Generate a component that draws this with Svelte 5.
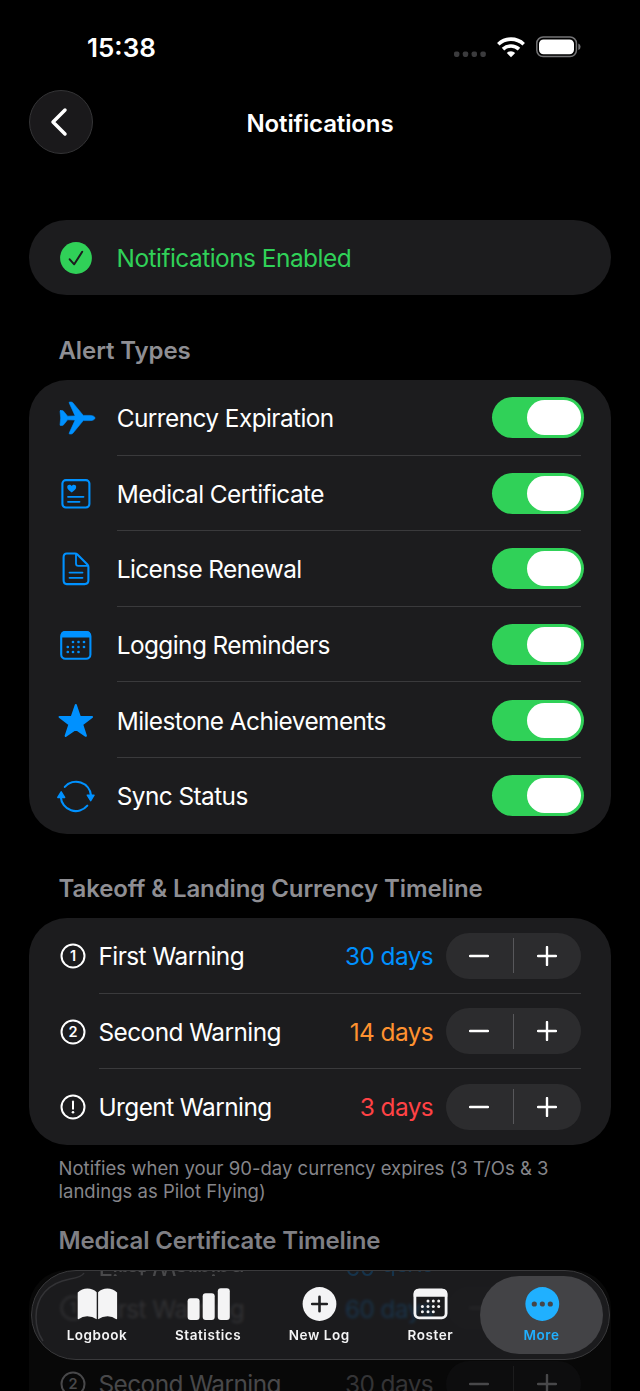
<script lang="ts">
  const alerts = $state([
    { icon: 'plane', label: 'Currency Expiration', on: true },
    { icon: 'medical', label: 'Medical Certificate', on: true },
    { icon: 'doc', label: 'License Renewal', on: true },
    { icon: 'calendar', label: 'Logging Reminders', on: true },
    { icon: 'star', label: 'Milestone Achievements', on: true },
    { icon: 'sync', label: 'Sync Status', on: true }
  ]);

  const landing = $state([
    { mark: '1', label: 'First Warning', days: 30, tone: 'blue' },
    { mark: '2', label: 'Second Warning', days: 14, tone: 'orange' },
    { mark: '!', label: 'Urgent Warning', days: 3, tone: 'red' }
  ]);

  const medical = $state([
    { mark: '1', label: 'First Warning', days: 60, tone: 'blue' },
    { mark: '2', label: 'Second Warning', days: 30, tone: 'plain' }
  ]);

  const tabs = [
    { icon: 'book', label: 'Logbook' },
    { icon: 'bars', label: 'Statistics' },
    { icon: 'add', label: 'New Log' },
    { icon: 'roster', label: 'Roster' },
    { icon: 'more', label: 'More' }
  ];
  let active = $state('More');
</script>

{#snippet calendarDots()}
  <g fill="currentColor" stroke="none">
    {#each [[17, 17], [22.5, 17], [28, 17], [11.8, 22], [17, 22], [22.5, 22], [28, 22], [11.8, 27], [17, 27], [22.5, 27]] as [x, y]}
      <circle cx={x} cy={y} r="1.35" />
    {/each}
  </g>
{/snippet}

{#snippet icon(name: string)}
  <svg class="icon" viewBox="0 0 40 40" fill="none" stroke="currentColor" stroke-width="2.1" stroke-linecap="round" stroke-linejoin="round">
    {#if name === 'plane'}
      <path d="M4.5 12.5h1.7q.9 0 1.4.7l4 5 7.5-.3-5.9-13q-.4-.9.6-.9h1.5q.9 0 1.5.7l10.5 12.7h6.7c2.8 0 5 1.1 5 2.6s-2.2 2.6-5 2.6h-6.7L16.8 35.3q-.6.7-1.5.7h-1.5q-1 0-.6-.9l5.9-13-7.5-.3-4 5q-.5.7-1.4.7H4.5q-.5 0-.5-.5l.7-7-.7-7q0-.5.5-.5z" fill="currentColor" stroke="currentColor" stroke-width=".6" />
    {:else if name === 'medical'}
      <rect x="6.4" y="6.100" width="27" height="27.400" rx="3.500" />
      <path d="M12 22.800h15.500M12 27.800h11.500" stroke-width="1.800" />
      <path d="M15.700 18.500c-2.800-1.700-4.500-3.400-4.500-5.400 0-2.600 3.200-3.200 4.500-1 1.300-2.200 4.500-1.600 4.500 1 0 2-1.700 3.700-4.500 5.400z" fill="currentColor" stroke="none" />
    {:else if name === 'doc'}
      <path d="M10.800 4.500h8.200q1.400 0 2.400 1l10 10q1 1 1 2.400v13.400q0 3.800-3.800 3.800H10.800Q7.600 35.100 7.600 31.300V8.300Q7.600 4.500 10.800 4.500z" />
      <path d="M20 5.500v9q0 2.400 2.400 2.400h9M13.500 23.600h13M13.500 28.800h13" stroke-width="1.800" />
    {:else if name === 'calendar'}
      <rect x="5.200" y="7" width="29.200" height="26.700" rx="4.200" />
      <path d="M5 12.500V10q0-4 4-4h21.600q4 0 4 4v2.500z" fill="currentColor" stroke="none" />
      {@render calendarDots()}
    {:else if name === 'star'}
      <path d="M19.800 5l4.100 12H36l-9.800 7.500 3.700 11.300-10.100-7-10.100 7 3.700-11.300L3.600 17h12.100z" fill="currentColor" />
    {:else if name === 'sync'}
      <path d="M8.800 10.900A15 15 0 0 1 35 19.400M31.300 29.700A15 15 0 0 1 4.800 20.900" />
      <path d="M31.300 19.200h6.700L34.700 24.700zM1.800 21.400h6.800L5.200 15.900z" fill="currentColor" stroke-width="1.500" />
    {/if}
  </svg>
{/snippet}

{#snippet tabIcon(name: string)}
  <svg class="tab-icon" viewBox="0 0 44 36" fill="currentColor">
    {#if name === 'book'}
      <path d="M2.700 6.500Q6.900 2.600 12.400 2.600q5.500 0 9.300 3.700v27Q17.400 30.300 12.200 30.300q-5 0-8.300 2.800-1.200.5-1.200-.6z" />
      <path d="M42.100 6.500Q37.900 2.600 32.400 2.600q-5.500 0-9.300 3.700v27q4.300-3 9.500-3 5 0 8.300 2.800 1.200.5 1.200-.6z" />
    {:else if name === 'bars'}
      <rect x="1.600" y="12.300" width="12" height="21.600" rx="3" />
      <rect x="16.700" y="7.300" width="12" height="26.600" rx="3" />
      <rect x="31.800" y="2.300" width="12" height="31.600" rx="3" />
    {:else if name === 'add'}
      <circle cx="22.500" cy="18" r="16.900" />
      <path d="M22.500 10.700v14.600M15.200 18h14.600" stroke="#202022" stroke-width="2.600" stroke-linecap="round" />
    {:else if name === 'roster'}
      <rect x="6.900" y="3.800" width="31.200" height="28" rx="4.300" fill="none" stroke="currentColor" stroke-width="2.800" />
      <path d="M5.700 10.800V8q0-5 5-5h23.600q5 0 5 5v2.800z" />
      {#each [[20, 15], [25.3, 15], [30.7, 15], [14.4, 20.4], [20, 20.4], [25.3, 20.4], [30.7, 20.4], [14.4, 25.8], [20, 25.8], [25.3, 25.8]] as [x, y]}
        <circle cx={x} cy={y} r="1.500" />
      {/each}
    {:else}
      <circle cx="22.300" cy="18" r="16.900" />
      <g fill="#454548">
        <circle cx="14.300" cy="18" r="2.600" />
        <circle cx="22.300" cy="18" r="2.600" />
        <circle cx="30.300" cy="18" r="2.600" />
      </g>
    {/if}
  </svg>
{/snippet}

{#snippet warningRow(row: any)}
  <div class="row warning">
    <svg class="mark" viewBox="0 0 26 26" fill="none" stroke="currentColor" stroke-width="2">
      <circle cx="13" cy="13" r="11.500" />
      {#if row.mark === '!'}
        <path d="M13 7.500v7.200" stroke-linecap="round" />
        <circle cx="13" cy="18.300" r="1.300" fill="currentColor" stroke="none" />
      {:else}
        <text x="13" y="18.300" text-anchor="middle" stroke="none" fill="currentColor">{row.mark}</text>
      {/if}
    </svg>
    <div class="row-main">
      <span class="label">{row.label}</span>
      <span class="days {row.tone}">{row.days} days</span>
      <div class="stepper">
        <button aria-label="Decrease" onclick={() => row.days--}>
          <svg viewBox="0 0 20 20"><path d="M1 10h18" /></svg>
        </button>
        <i></i>
        <button aria-label="Increase" onclick={() => row.days++}>
          <svg viewBox="0 0 20 20"><path d="M1 10h18M10 1v18" /></svg>
        </button>
      </div>
    </div>
  </div>
{/snippet}

<div class="screen">
  <div class="status">
    <span class="time">15:38</span>
    <div class="signals">
      <svg width="33" height="22" viewBox="0 0 33 22" fill="#3b3b3d">
        <rect x="1" y="15.500" width="5.400" height="5.400" rx="1.800" />
        <rect x="9.800" y="15.500" width="5.400" height="5.400" rx="1.800" />
        <rect x="18.600" y="15.500" width="5.400" height="5.400" rx="1.800" />
        <rect x="27.400" y="15.500" width="5.400" height="5.400" rx="1.800" />
      </svg>
      <svg width="28" height="22" viewBox="0 0 28 22" fill="none" stroke="#fff" stroke-width="3.600">
        <path d="M1.300 8.200a18.500 18.500 0 0 1 25.400 0M6 13.100a11.800 11.800 0 0 1 16 0" />
        <path d="M14 21.200l-4.200-4.300a6.200 6.200 0 0 1 8.400 0z" fill="#fff" stroke="none" />
      </svg>
      <svg width="45" height="22" viewBox="0 0 45 22">
        <rect x=".8" y="1" width="39.600" height="19.600" rx="6.300" fill="none" stroke="#747476" stroke-width="1.500" />
        <rect x="3" y="3.400" width="35" height="14.800" rx="4.500" fill="#fff" />
        <path d="M42.300 7.500q2.300.8 2.300 3.300t-2.300 3.300z" fill="#747476" />
      </svg>
    </div>
  </div>

  <header>
    <button class="back" aria-label="Back">
      <svg width="18" height="30" viewBox="0 0 18 30"><path d="M15 3L3 15l12 12" /></svg>
    </button>
    <h1>Notifications</h1>
  </header>

  <main>
    <section class="card banner">
      <svg width="32" height="32" viewBox="0 0 32 32">
        <circle cx="16" cy="16" r="15.900" fill="#30d158" />
        <path d="M9.700 17.300l4.500 5 8-12.500" fill="none" stroke="#1c1c1e" stroke-width="2" stroke-linecap="round" stroke-linejoin="round" />
      </svg>
      <span class="label">Notifications Enabled</span>
    </section>

    <h2>Alert Types</h2>
    <section class="card">
      {#each alerts as alert}
        <div class="row">
          {@render icon(alert.icon)}
          <div class="row-main">
            <span class="label">{alert.label}</span>
            <button class="toggle" class:on={alert.on} role="switch" aria-checked={alert.on} aria-label={alert.label} onclick={() => (alert.on = !alert.on)}>
              <span></span>
            </button>
          </div>
        </div>
      {/each}
    </section>

    <h2 class="timeline">Takeoff &amp; Landing Currency Timeline</h2>
    <section class="card">
      {#each landing as row}
        {@render warningRow(row)}
      {/each}
    </section>
    <p class="note">Notifies when your 90-day currency expires (3 T/Os &amp; 3 landings as Pilot Flying)</p>

    <h2 class="after-note">Medical Certificate Timeline</h2>
    <section class="card faded">
      {#each medical as row}
        {@render warningRow(row)}
      {/each}
    </section>
  </main>

  <nav>
    <!-- content bent back along the glass edge -->
    <div class="refraction" aria-hidden="true">
      <span>First Warning</span>
      <span class="blue">60 days</span>
    </div>
    <svg class="rim" width="60" height="88" viewBox="0 0 60 88" fill="none" stroke="#3a3a3d" stroke-width="1.500">
      <path d="M52 2q-2 4-14 6C16 12 4 26 4 46q0 14 7 24" />
    </svg>
    {#each tabs as tab}
      <button class="tab" class:active={active === tab.label} onclick={() => (active = tab.label)}>
        {@render tabIcon(tab.icon)}
        <span>{tab.label}</span>
      </button>
    {/each}
  </nav>
</div>

<style>
  :global(body) {
    margin: 0;
    background: #000;
  }

  .screen {
    position: relative;
    width: 640px;
    height: 1391px;
    overflow: hidden;
    box-sizing: border-box;
    background: #000;
    color: #fff;
    font-family: Inter, 'Liberation Sans', sans-serif;
    font-size: 24.4px;
    letter-spacing: -0.57px;
  }

  button {
    border: 0;
    padding: 0;
    background: none;
    color: inherit;
    font: inherit;
  }

  svg {
    display: block;
    flex: none;
  }

  .status {
    display: flex;
    justify-content: space-between;
    align-items: center;
    height: 94px;
    padding: 0 59px 0 87px;
    box-sizing: border-box;
  }

  .time {
    padding-top: 1px;
    font-size: 26px;
    font-weight: 600;
    letter-spacing: 0;
  }

  .signals {
    display: flex;
    gap: 11px;
  }

  header {
    display: grid;
    grid-template-columns: 64px 1fr 64px;
    align-items: center;
    height: 64px;
    margin: -4px 29px 0;
  }

  .back {
    display: grid;
    place-items: center;
    width: 64px;
    height: 64px;
    border: 1.5px solid #343436;
    border-radius: 50%;
    background: #1a191b;
    box-sizing: border-box;
    padding-right: 4px;
  }

  .back path {
    fill: none;
    stroke: #fff;
    stroke-width: 3.5;
    stroke-linecap: round;
    stroke-linejoin: round;
  }

  h1 {
    margin: 0;
    padding-top: 2px;
    text-align: center;
    font-size: 24px;
    font-weight: 600;
    letter-spacing: -0.12px;
  }

  main {
    padding: 66px 29.5px 0 29px;
  }

  .card {
    background: #1c1c1e;
    border-radius: 38px;
    overflow: hidden;
  }

  .banner {
    display: flex;
    align-items: center;
    gap: 25px;
    height: 75px;
    padding-left: 30.5px;
    color: #30d158;
    letter-spacing: -0.5px;
  }

  h2 {
    display: flex;
    align-items: flex-end;
    height: 85px;
    margin: 0;
    padding: 0 29.5px 14px;
    box-sizing: border-box;
    font-size: 24px;
    font-weight: 600;
    line-height: 30px;
    letter-spacing: -0.1px;
    color: #8e8e93;
  }

  .timeline {
    height: 84.4px;
  }

  .row {
    display: flex;
    align-items: stretch;
    height: 75.6px;
    padding-left: 27px;
  }

  .icon {
    width: 40px;
    height: 40px;
    margin: 18px 20.7px 0 0;
    color: #0091ff;
  }

  .row-main {
    display: flex;
    flex: 1;
    align-items: center;
    margin-right: 29.7px;
    padding-top: 1px;
    border-bottom: 1.5px solid #3a3a3c;
    box-sizing: border-box;
  }

  .row:last-child .row-main {
    border-bottom-color: transparent;
  }

  .label {
    flex: 1;
    padding-top: 1px;
    white-space: nowrap;
  }

  .toggle {
    width: 92px;
    height: 41px;
    margin-right: -3.5px;
    padding: 3px;
    border-radius: 21px;
    background: #39393d;
  }

  .toggle span {
    display: block;
    width: 54px;
    height: 35px;
    border-radius: 18px;
    background: #fff;
  }

  .toggle.on {
    background: #30d158;
  }

  .toggle.on span {
    margin-left: auto;
  }

  .warning {
    padding-left: 30.5px;
  }

  .mark {
    width: 26px;
    height: 26px;
    margin: 25px 13px 0 0;
  }

  .mark text {
    font-size: 14.5px;
    font-weight: 600;
    letter-spacing: 0;
  }

  .days {
    margin-right: 12.7px;
    padding-top: 1px;
  }

  .blue {
    color: #0091ff;
  }

  .orange {
    color: #ff9230;
  }

  .red {
    color: #ff4245;
  }

  .stepper {
    display: flex;
    align-items: center;
    width: 135px;
    height: 46px;
    border-radius: 23px;
    background: #2c2c2e;
  }

  .stepper button {
    display: grid;
    flex: 1;
    place-items: center;
    height: 100%;
  }

  .stepper svg {
    width: 20px;
    height: 20px;
    fill: none;
    stroke: #fff;
    stroke-width: 2.4;
    stroke-linecap: round;
  }

  .stepper i {
    width: 1.5px;
    height: 35px;
    background: #58585b;
  }

  .note {
    margin: 12px 29.5px 0;
    color: #85858a;
    font-size: 18.5px;
    line-height: 23.5px;
    letter-spacing: 0.02px;
  }

  .after-note {
    height: 66.6px;
    color: #7f7f84;
    letter-spacing: -0.15px;
  }

  .faded {
    background: #080808;
    border-radius: 38px 38px 0 0;
    color: #48484a;
  }

  .faded .row-main {
    border-color: #161617;
  }

  .faded .stepper {
    background: #0d0d0e;
  }

  .faded .stepper svg {
    stroke: #48484a;
  }

  .faded .stepper i {
    background: #1c1c1d;
  }

  .faded .row:first-child {
    color: #8a8a8c;
  }

  .faded .plain {
    color: #343436;
  }

  nav {
    position: absolute;
    left: 30.5px;
    top: 1270px;
    display: flex;
    justify-content: space-between;
    width: 579px;
    height: 90px;
    padding: 5px 5.5px 5px 4px;
    box-sizing: border-box;
    border: 1.5px solid #3a3a3c;
    border-radius: 45px;
    background: rgba(31, 31, 33, 0.84);
    backdrop-filter: blur(1.5px);
  }

  .refraction {
    position: absolute;
    left: 67px;
    top: 0;
    width: 335px;
    height: 5px;
    overflow: hidden;
    display: flex;
    justify-content: space-between;
    align-items: flex-end;
    opacity: 0.2;
    filter: blur(0.6px);
  }

  .refraction span {
    line-height: 24px;
    margin-bottom: -3px;
    transform: scaleY(-1);
  }

  .rim {
    position: absolute;
    left: 0;
    top: 0;
    opacity: 0.8;
  }

  .tab {
    position: relative;
    display: flex;
    flex-direction: column;
    align-items: center;
    width: 123px;
    margin-right: -12px;
    padding-top: 10px;
    box-sizing: border-box;
    border-radius: 40px;
    color: #f4f4f5;
    font-size: 13.5px;
    font-weight: 600;
    line-height: 17px;
    letter-spacing: 0.55px;
  }

  .tab:last-child {
    margin-right: 0;
  }

  .tab.active {
    background: #434346;
    color: #20b0ff;
  }

  .tab-icon {
    width: 44px;
    height: 36px;
    margin-bottom: 5px;
  }
</style>
